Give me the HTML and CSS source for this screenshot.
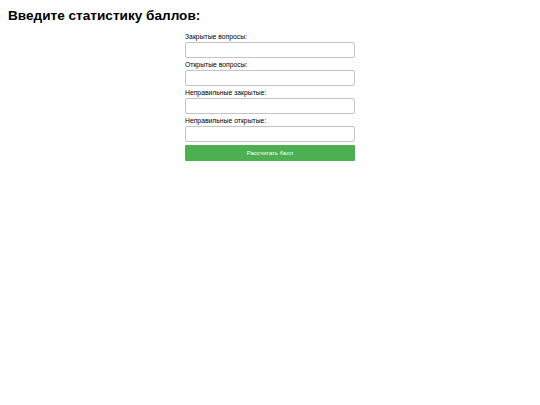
FILE: index.html
```html
<!DOCTYPE html>
<html lang="ru">
<head>
<meta charset="utf-8">
<title>Статистика баллов</title>
<link rel="stylesheet" href="styles.css">
</head>
<body>
<h1 class="title">Введите статистику баллов:</h1>
<form class="score-form">
  <label class="field-label" for="closed">Закрытые вопросы:</label>
  <input class="field-input" id="closed" type="number">
  <label class="field-label" for="open">Открытые вопросы:</label>
  <input class="field-input" id="open" type="number">
  <label class="field-label" for="wrong-closed">Неправильные закрытые:</label>
  <input class="field-input" id="wrong-closed" type="number">
  <label class="field-label" for="wrong-open">Неправильные открытые:</label>
  <input class="field-input" id="wrong-open" type="number">
  <button class="submit" type="button">Рассчитать балл</button>
</form>
</body>
</html>
```
FILE: styles.css
```css
html, body {
  margin: 0;
  padding: 0;
  background: #fff;
}
body {
  padding: 8px;
  font-family: "Liberation Sans", Arial, sans-serif;
  color: #000;
}
.title {
  font-size: 13.6px;
  font-weight: bold;
  margin: 0 0 9px 0;
  line-height: 16px;
}
.score-form {
  width: 170px;
  margin: 0 auto;
  display: flex;
  flex-direction: column;
}
.field-label {
  font-size: 6.8px;
  line-height: 8px;
  margin-top: 3px;
}
.field-label:first-child {
  margin-top: 0;
}
.field-input {
  box-sizing: border-box;
  width: 170px;
  height: 16px;
  margin: 1px 0 0 0;
  padding: 0 4px;
  border: 1px solid #c4c4c4;
  border-radius: 2px;
  font-size: 7px;
  background: #fff;
}
.submit {
  margin-top: 3px;
  height: 16px;
  border: none;
  border-radius: 1px;
  background: #4caf50;
  color: #fff;
  font-family: "Liberation Sans", Arial, sans-serif;
  font-size: 6px;
  padding: 0;
}
```
